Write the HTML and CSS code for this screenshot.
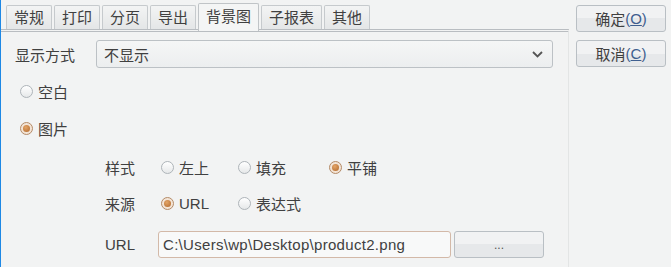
FILE: index.html
```html
<!DOCTYPE html>
<html lang="zh-CN">
<head>
  <meta charset="UTF-8">
  <title>背景图</title>
  <link rel="stylesheet" href="styles.css">
</head>
<body>
<div class="dialog">
  <div class="main">
    <div class="tabs">
      <div class="tab">常规</div>
      <div class="tab">打印</div>
      <div class="tab">分页</div>
      <div class="tab">导出</div>
      <div class="tab active">背景图</div>
      <div class="tab">子报表</div>
      <div class="tab">其他</div>
    </div>
    <div class="panel">
      <div class="row-select">
        <span class="label">显示方式</span>
        <div class="select">
          <span>不显示</span>
          <svg width="11" height="7" viewBox="0 0 11 7"><path d="M1 1 L5.5 5.5 L10 1" fill="none" stroke="#555" stroke-width="1.8"/></svg>
        </div>
      </div>
      <div class="radio-row r-blank"><span class="radio"></span>空白</div>
      <div class="radio-row r-pic"><span class="radio checked"></span>图片</div>
      <div class="sub">
        <div class="opt-grid">
          <span class="label">样式</span>
          <span class="opt"><span class="radio"></span>左上</span>
          <span class="opt"><span class="radio"></span>填充</span>
          <span class="opt"><span class="radio checked"></span>平铺</span>
        </div>
        <div class="opt-grid second">
          <span class="label">来源</span>
          <span class="opt"><span class="radio checked"></span>URL</span>
          <span class="opt"><span class="radio"></span>表达式</span>
        </div>
        <div class="url-row">
          <span class="label url-label">URL</span>
          <div class="input">C:\Users\wp\Desktop\product2.png</div>
          <div class="btn browse">...</div>
        </div>
      </div>
    </div>
  </div>
  <div class="side">
    <div class="btn">确定<span class="key">(<u>O</u>)</span></div>
    <div class="btn">取消<span class="key">(<u>C</u>)</span></div>
  </div>
</div>
</body>
</html>
```

FILE: styles.css
```css
body { margin: 0; background: #f2f3f3; font-family: "Liberation Sans", "Noto Sans CJK SC", sans-serif; font-size: 15px; color: #404040; height: 267px; overflow: hidden; border-left: 1px solid #1e88e5; box-sizing: border-box; }
.dialog { display: flex; height: 100%; }
.main { width: 568px; display: flex; flex-direction: column; }
.tabs { display: flex; gap: 2px; padding: 3px 0 0 5px; height: 26px; align-items: flex-end; }
.tab { height: 24px; line-height: 23px; padding: 0 7px; border: 1px solid #c6cacd; border-bottom: none; border-radius: 2px 2px 0 0; background: linear-gradient(#f3f4f4, #e4e6e7); box-sizing: border-box; }
.tab.active { height: 28px; margin-bottom: -2px; line-height: 26px; background: #f4f5f5; border-color: #c0c4c7; position: relative; z-index: 1; }
.panel { flex: 1; border-top: 3px double #b9bdc1; border-right: 1px solid #e3e5e5; padding: 8px 0 0 14px; }
.row-select { display: flex; align-items: center; height: 28px; }
.label { width: 81px; flex: none; }
.select { width: 457px; height: 28px; box-sizing: border-box; border: 1px solid #bcc1c5; border-radius: 3px; background: linear-gradient(#f5f6f6, #eceeef); display: flex; align-items: center; justify-content: space-between; padding: 0 9px 0 7px; }
.radio-row { display: flex; align-items: center; height: 26px; margin-left: 5px; }
.r-blank { margin-top: 10px; }
.r-pic { margin-top: 11px; }
.radio { width: 13px; height: 13px; box-sizing: border-box; border: 1px solid #aeb4b9; border-radius: 50%; background: linear-gradient(#ffffff, #e6e8e9); margin-right: 5px; display: inline-flex; align-items: center; justify-content: center; flex: none; }
.radio.checked { border-color: #b48b68; background: #f3e4d6; }
.radio.checked::after { content: ""; width: 7px; height: 7px; border-radius: 50%; background: radial-gradient(circle at 40% 35%, #e4a466, #b0682c); }
.sub { padding-left: 90px; }
.opt-grid { display: grid; grid-template-columns: 56px 77px 91px auto; align-items: center; height: 26px; margin-top: 13px; }
.opt-grid.second { margin-top: 10px; }
.opt-grid .label, .url-label { width: auto; }
.opt { display: flex; align-items: center; }
.url-row { display: flex; align-items: center; margin-top: 15px; height: 27px; }
.url-label { width: 53px; }
.input { width: 293px; height: 27px; box-sizing: border-box; border: 1px solid #d3b9a8; border-radius: 3px; background: #f8f9f9; line-height: 25px; padding-left: 4px; letter-spacing: 0.3px; }
.btn { width: 90px; height: 27px; box-sizing: border-box; border: 1px solid #b9bfc4; border-radius: 3px; background: linear-gradient(#f1f2f3 50%, #e6e8ea 50%); display: flex; align-items: center; justify-content: center; }
.browse { margin-left: 3px; font-size: 12px; color: #555; }
.side { padding: 5px 0 0 7px; display: flex; flex-direction: column; gap: 8px; }
.key { color: #3f5f8f; }
```
